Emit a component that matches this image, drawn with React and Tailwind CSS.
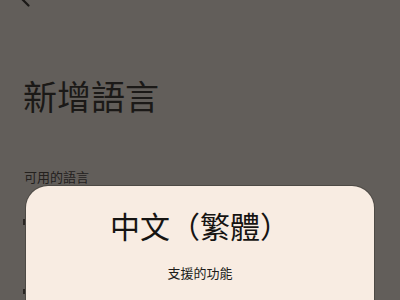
const CJK = "font-['Noto_Sans_CJK_TC','Noto_Sans_CJK_SC',sans-serif]"

export default function App() {
  return (
    <div className={`relative h-[300px] w-[400px] overflow-hidden bg-[#625e5a] text-[#1b1917] ${CJK}`}>
      <svg width="40" height="10" viewBox="0 0 40 10" className="block">
        <path d="M17 -6 L28.5 5.5" stroke="#1b1917" strokeWidth="2.2" strokeLinecap="round" fill="none" />
      </svg>

      <h1 className="ml-[23px] mt-[69px] text-[34px] font-normal leading-none">新增語言</h1>

      <p className="ml-[24px] mt-[57px] text-[13px] leading-none text-[#24211e]">可用的語言</p>

      <div className="ml-[23px] mt-[36px] flex flex-col gap-[64px]">
        <span className="block h-[6px] w-[2px] bg-[#2a2623]" />
        <span className="block h-[5px] w-[2px] bg-[#2a2623]" />
      </div>

      <div className="absolute bottom-0 left-[26px] right-[26px] top-[186px] rounded-t-[22px] bg-[#f8ece2] shadow-[0_0_0_1px_rgba(40,36,32,0.35)]">
        <div className="flex flex-col items-center pt-[24px]">
          <h2 className="text-[30px] font-normal leading-none text-[#161412]">中文（繁體）</h2>
          <p className="mt-[26px] text-[13px] leading-none text-[#201d1a]">支援的功能</p>
        </div>
      </div>
    </div>
  )
}
